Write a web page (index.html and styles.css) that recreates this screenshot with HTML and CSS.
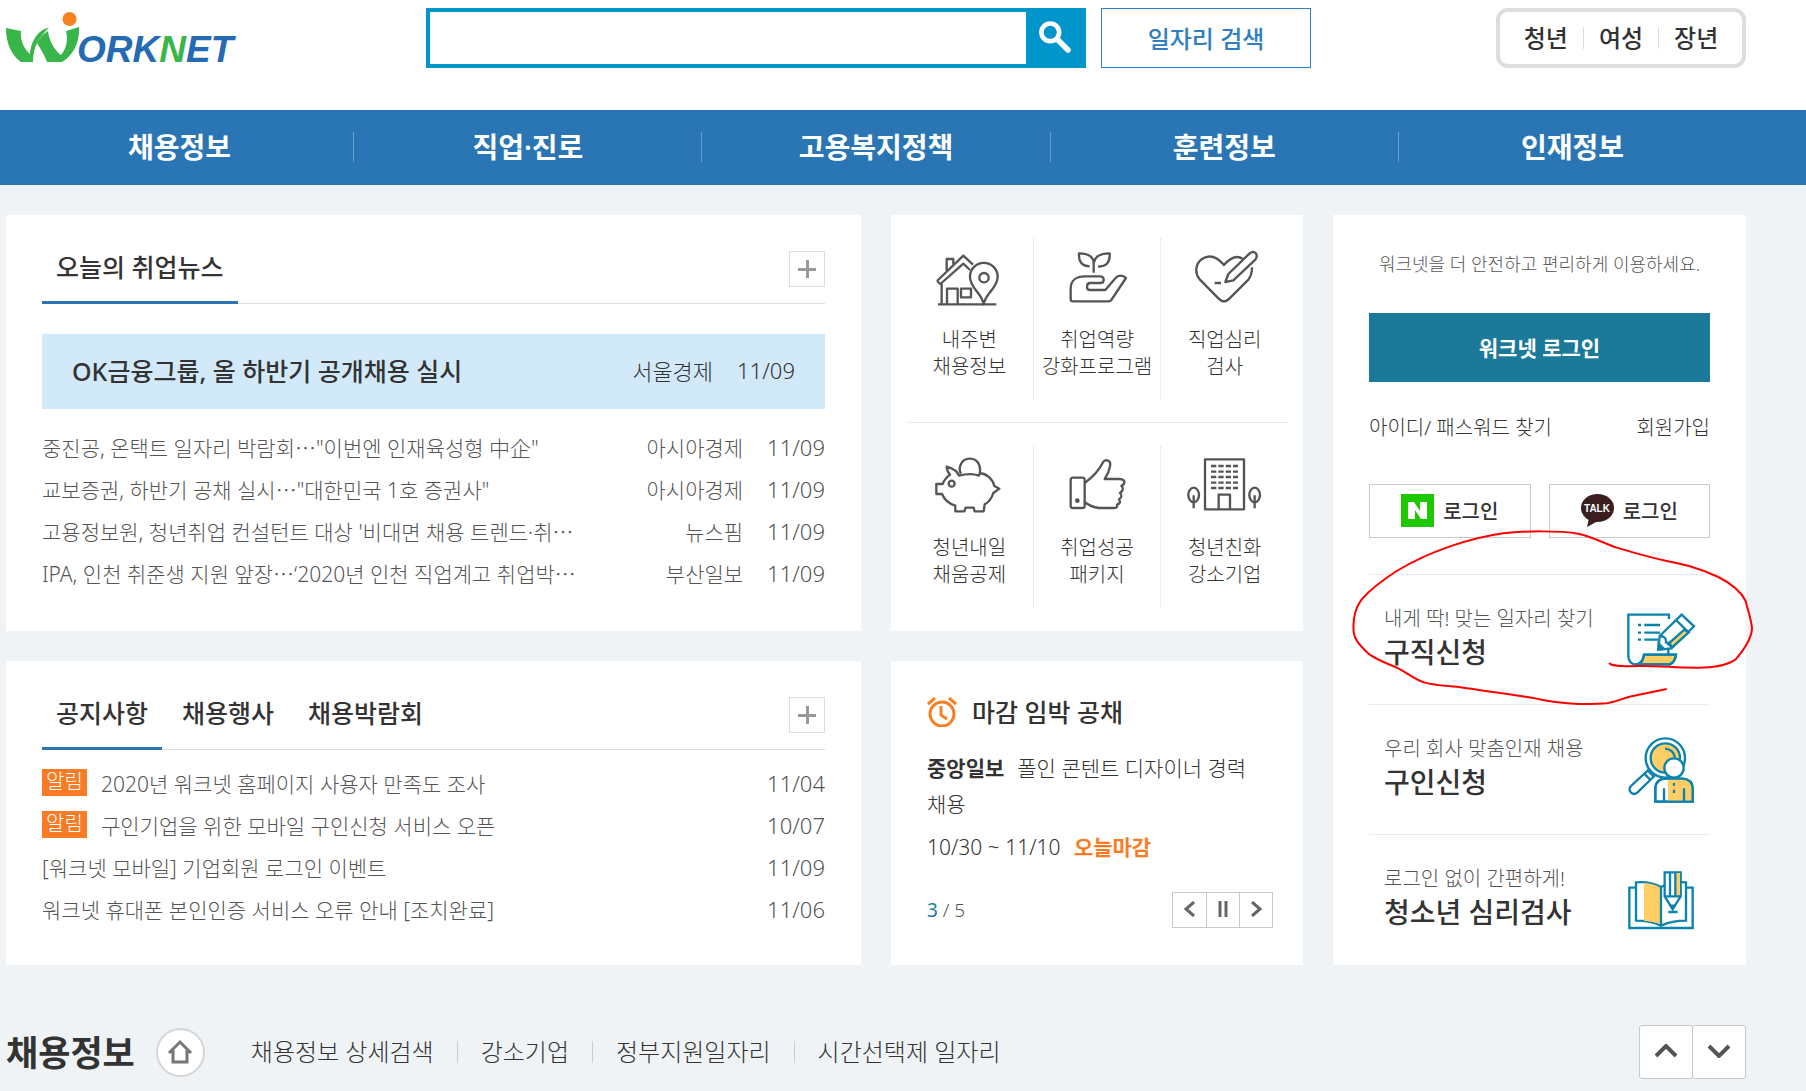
FILE: index.html
```html
<!DOCTYPE html>
<html lang="ko">
<head>
    <meta charset="UTF-8">
    <meta name="viewport" content="width=device-width, initial-scale=1.0">
    <title>워크넷</title>
    <link rel="stylesheet" href="styles.css">
</head>
<body>

<header id="header">
    <a href="#" class="logo" aria-label="WORKNET">
        <svg width="250" height="80" viewBox="0 8 250 80">
            <path fill="#39b54a" d="M6 28 L21 31 C20 40 24 49 30 54 C31 40 39 29 49 28 C40 36 33 46 33 62 L21 62 C11 55 6 43 6 28Z"/>
            <path fill="#39b54a" d="M48 31 C49 40 54 50 61 55 C67 48 68 39 66 31 L79 27 C80 44 72 56 62 62 L47 62 C44 54 40 48 37 43 C40 37 44 33 48 31Z"/>
            <circle fill="#f5821f" cx="69.500" cy="19" r="7"/>
            <text class="logo-text" x="77" y="62"><tspan fill="#256bb4">ORK</tspan><tspan fill="#39b54a">N</tspan><tspan fill="#256bb4">ET</tspan></text>
        </svg>
    </a>
    <form class="search">
        <input type="text" aria-label="검색어">
        <button type="submit" aria-label="검색">
            <svg width="60" height="60" viewBox="0 0 60 60" fill="none" stroke="#fff">
                <circle cx="26" cy="25" r="9.500" stroke-width="5"/>
                <path d="M34 33 L45 44" stroke-width="6" stroke-linecap="round"/>
            </svg>
        </button>
    </form>
    <button type="button" class="job-search">일자리 검색</button>
    <ul class="groups">
        <li><a href="#">청년</a></li>
        <li><a href="#">여성</a></li>
        <li><a href="#">장년</a></li>
    </ul>
</header>

<nav id="gnb">
    <a href="#">채용정보</a>
    <a href="#">직업·진로</a>
    <a href="#">고용복지정책</a>
    <a href="#">훈련정보</a>
    <a href="#">인재정보</a>
</nav>

<main id="main">
    <section class="card news">
        <div class="tabs">
            <a href="#" class="tab on">오늘의 취업뉴스</a>
            <button type="button" class="more" aria-label="더보기"></button>
        </div>
        <a href="#" class="headline">
            <strong>OK금융그룹, 올 하반기 공개채용 실시</strong>
            <span>서울경제</span>
            <span>11/09</span>
        </a>
        <ul class="list">
            <li><a href="#">중진공, 온택트 일자리 박람회⋯"이번엔 인재육성형 中企"</a><span>아시아경제</span><span>11/09</span></li>
            <li><a href="#">교보증권, 하반기 공채 실시⋯"대한민국 1호 증권사"</a><span>아시아경제</span><span>11/09</span></li>
            <li><a href="#">고용정보원, 청년취업 컨설턴트 대상 '비대면 채용 트렌드·취⋯</a><span>뉴스핌</span><span>11/09</span></li>
            <li><a href="#">IPA, 인천 취준생 지원 앞장⋯‘2020년 인천 직업계고 취업박⋯</a><span>부산일보</span><span>11/09</span></li>
        </ul>
    </section>

    <section class="card quick">
        <div class="quick-row">
            <a href="#">
                <svg width="76" height="60" viewBox="155 120 228 180">
                    <path d="M187 222V283M203 283V236H235V283M245 236H275V262H245ZM176 283H351M202 182V147H222V163M173 213L252 137L281 164M173 213L183 222L252 161L272 180M173 213L183 222"/>
                    <path d="M313 283C309 250 272 235 272 200A41 41 0 0 1 355 200C355 235 317 250 313 283Z"/>
                    <circle cx="314" cy="203" r="14"/>
                </svg>
                <span>내주변<br>채용정보</span>
            </a>
            <a href="#">
                <svg width="76" height="60" viewBox="535 120 228 180">
                    <path d="M639 188V158C637 136 617 130 595 130C593 154 603 169 627 169M640 158C643 138 660 130 687 130C689 156 678 170 652 170"/>
                    <path d="M577 274Q570 274 570 266V236C570 209 590 199 612 199H658Q669 199 669 209Q669 219 658 219H628Q619 219 619 230Q619 240 628 240H674L704 205C713 194 727 195 736 204L692 270Q689 274 683 274Z"/>
                </svg>
                <span>취업역량<br>강화프로그램</span>
            </a>
            <a href="#">
                <svg width="76" height="60" viewBox="920 120 228 180">
                    <path d="M1087 146C1068 134 1048 145 1031 165C1008 138 985 134 965 147C944 162 943 190 958 208L1015 266Q1031 283 1047 266L1105 208Q1115 195 1115 172M1003 219H1022"/>
                    <path d="M1035 216L1044 192L1107 131Q1118 122 1127 130Q1132 139 1125 149L1059 211Z"/>
                </svg>
                <span>직업심리<br>검사</span>
            </a>
        </div>
        <div class="quick-row">
            <a href="#">
                <svg width="76" height="60" viewBox="155 744 228 180">
                    <path d="M245 791C236 777 243 746 272 746C300 746 307 776 299 797C282 791 258 792 239 797C235 785 219 775 202 770C203 781 206 788 212 794Q196 806 190 822H171V852H188C196 871 208 881 228 887V904H255L259 893H283L286 904H313L316 883Q334 874 342 849L360 836L345 828C340 807 323 791 300 789"/>
                    <circle cx="217" cy="821" r="9"/>
                </svg>
                <span>청년내일<br>채움공제</span>
            </a>
            <a href="#">
                <svg width="76" height="60" viewBox="535 744 228 180">
                    <rect x="570" y="803" width="42" height="91" rx="7"/>
                    <circle class="dot" cx="590" cy="872" r="7"/>
                    <path d="M612 819C637 801 655 782 667 757Q672 748 682 752Q691 756 688 769C685 787 679 796 672 807H715C730 807 734 814 729 823L722 827Q733 838 718 849Q728 860 715 868Q723 879 709 884Q712 894 700 894H655Q630 891 612 876"/>
                </svg>
                <span>취업성공<br>패키지</span>
            </a>
            <a href="#">
                <svg width="76" height="60" viewBox="920 744 228 180">
                    <path d="M974 748H1091V898H974ZM1015 898V854H1049V898M940 895V856M1123 895V856"/>
                    <path stroke-dasharray="16 6" d="M992 768H1073M992 785H1073M992 801H1073M992 818H1073M992 834H1073"/>
                    <ellipse cx="940" cy="855" rx="16" ry="22"/>
                    <ellipse cx="1123" cy="855" rx="16" ry="22"/>
                </svg>
                <span>청년친화<br>강소기업</span>
            </a>
        </div>
    </section>

    <aside class="card side">
        <p class="welcome">워크넷을 더 안전하고 편리하게 이용하세요.</p>
        <button type="button" class="login">워크넷 로그인</button>
        <div class="member">
            <a href="#">아이디/ 패스워드 찾기</a>
            <a href="#">회원가입</a>
        </div>
        <div class="sns">
            <button type="button">
                <svg width="33" height="33" viewBox="0 0 33 33">
                    <path fill="#1ec800" d="M0 0H33V33H0Z"/>
                    <path fill="#fff" d="M7 8H13L19 17V8H26V25H20L14 16V25H7Z"/>
                </svg>
                로그인
            </button>
            <button type="button">
                <svg width="33" height="33" viewBox="0 0 33 33">
                    <ellipse fill="#3b1e1e" cx="16.500" cy="14" rx="16.500" ry="14"/>
                    <path fill="#3b1e1e" d="M8 24L6 33L17 27Z"/>
                    <text class="talk" x="16" y="18">TALK</text>
                </svg>
                로그인
            </button>
        </div>
        <a href="#" class="apply marked">
            <span>내게 딱! 맞는 일자리 찾기<strong>구직신청</strong></span>
            <svg class="apply-icon" width="70" height="70" viewBox="920 258 210 210">
                <path fill="#ffcf66" d="M974 407H1070Q1068 428 1052 436H960Q972 427 974 407Z"/>
                <path d="M1049 300V287H927V412Q929 435 948 436Q970 434 974 407H1070Q1068 428 1052 436H948M1047 390V405"/>
                <path d="M956 318H965M956 341H965M956 362H965M975 318H1022M975 341H1022M975 362H1016"/>
                <path fill="#fff" d="M1087 287L1124 322L1056 388L1017 392L1021 351Z"/>
                <path fill="#ffcf66" d="M1095 332L1108 340L1058 385L1046 375Z"/>
                <path d="M1070 303L1108 340M1021 351Q1042 352 1040 370Q1056 370 1056 388"/>
                <path fill="#0c83ad" d="M1018 374L1033 389L1017 392Z"/>
            </svg>
            <!-- hand drawn mark round the first item -->
            <svg class="mark" width="407" height="183" viewBox="90 20 1221 549">
                <path d="M868 427C870 436 890 436 920 438C1000 433 1060 443 1135 442C1190 442 1225 432 1247 417C1275 385 1294 355 1296 325C1294 295 1283 270 1277 242C1262 212 1235 190 1195 170C1130 140 1090 132 1040 122C980 109 940 97 890 82C850 68 820 50 775 40C720 31 610 31 550 39C450 53 330 92 230 152C190 178 150 208 125 237C102 268 98 300 101 335C102 355 115 370 145 400C175 422 205 430 235 444C270 463 285 478 315 487C350 497 390 496 430 502C520 516 600 524 680 541C750 552 800 554 860 549C890 544 905 535 935 528L1040 506"/>
            </svg>
        </a>
        <a href="#" class="apply">
            <span>우리 회사 맞춤인재 채용<strong>구인신청</strong></span>
            <svg class="apply-icon" width="70" height="70" viewBox="920 648 210 210">
                <circle fill="#fff" cx="1038" cy="717" r="59"/>
                <circle fill="#ffcf66" cx="1038" cy="717" r="44"/>
                <path d="M1037 689Q1062 691 1067 715"/>
                <path fill="#fff" d="M985 755L1004 772L954 821Q944 829 935 821Q926 811 935 801Z"/>
                <path d="M975 764L993 783"/>
                <circle fill="#fff" cx="1064" cy="747" r="29"/>
                <path fill="#fff" d="M1008 848V808Q1010 779 1040 779H1089Q1119 781 1120 808V848Z"/>
                <path class="plain" fill="#ffcf66" d="M1046 781H1089Q1116 782 1118 808V846H1046Z"/>
                <path d="M1008 848V808Q1010 779 1040 779H1089Q1119 781 1120 808V848ZM1034 808V848M1094 808V848M1064 792V800M1064 812V822"/>
            </svg>
        </a>
        <a href="#" class="apply">
            <span>로그인 없이 간편하게!<strong>청소년 심리검사</strong></span>
            <svg class="apply-icon" width="70" height="70" viewBox="920 1038 210 210">
                <path d="M948 1106H930V1227H1120V1106H1102"/>
                <path fill="#fff" d="M1025 1104Q990 1086 950 1090V1205Q995 1205 1025 1220Q1058 1205 1100 1205V1090Q1060 1086 1025 1104Z"/>
                <path class="plain" fill="#ffcf66" d="M974 1092Q1004 1094 1023 1106V1215Q1000 1207 974 1205Z"/>
                <path d="M1025 1104V1220M1047 1179H1075"/>
                <path fill="#fff" d="M1036 1060H1084V1132L1060 1170L1036 1132Z"/>
                <path class="plain" fill="#ffcf66" d="M1068 1062H1082V1130H1068Z"/>
                <path d="M1036 1132H1084M1052 1060V1132M1068 1060V1132"/>
                <path fill="#0c83ad" d="M1054 1160H1066L1060 1170Z"/>
            </svg>
        </a>
    </aside>

    <section class="card notice">
        <div class="tabs">
            <a href="#" class="tab on">공지사항</a>
            <a href="#" class="tab">채용행사</a>
            <a href="#" class="tab">채용박람회</a>
            <button type="button" class="more" aria-label="더보기"></button>
        </div>
        <ul class="list">
            <li><em>알림</em><a href="#">2020년 워크넷 홈페이지 사용자 만족도 조사</a><span>11/04</span></li>
            <li><em>알림</em><a href="#">구인기업을 위한 모바일 구인신청 서비스 오픈</a><span>10/07</span></li>
            <li><a href="#">[워크넷 모바일] 기업회원 로그인 이벤트</a><span>11/09</span></li>
            <li><a href="#">워크넷 휴대폰 본인인증 서비스 오류 안내 [조치완료]</a><span>11/06</span></li>
        </ul>
    </section>

    <section class="card deadline">
        <h2>
            <svg width="30" height="30" viewBox="0 0 30 30" fill="none" stroke="#f58025" stroke-width="3">
                <circle cx="15" cy="17" r="12"/>
                <path d="M14 9V18L20 22M1 7L8 1M29 7L22 1"/>
            </svg>
            마감 임박 공채
        </h2>
        <p><a href="#"><strong>중앙일보</strong>폴인 콘텐트 디자이너 경력 채용</a></p>
        <p class="period">10/30 ~ 11/10 <b>오늘마감</b></p>
        <div class="pager">
            <span><b>3</b> / 5</span>
            <div class="controls">
                <button type="button" aria-label="이전"><svg width="16" height="16" viewBox="0 0 16 16"><path d="M12 1L4 8L12 15"/></svg></button>
                <button type="button" aria-label="정지"><svg width="16" height="16" viewBox="0 0 16 16"><path d="M5 0V16M11 0V16"/></svg></button>
                <button type="button" aria-label="다음"><svg width="16" height="16" viewBox="0 0 16 16"><path d="M4 1L12 8L4 15"/></svg></button>
            </div>
        </div>
    </section>
</main>

<section id="jobs">
    <h2>채용정보</h2>
    <a href="#" class="home" aria-label="채용정보 홈">
        <svg width="26" height="26" viewBox="0 0 26 26"><path d="M2 14L13 3L24 14M6 11V23H20V11"/></svg>
    </a>
    <ul class="job-links">
        <li><a href="#">채용정보 상세검색</a></li>
        <li><a href="#">강소기업</a></li>
        <li><a href="#">정부지원일자리</a></li>
        <li><a href="#">시간선택제 일자리</a></li>
    </ul>
    <div class="updown">
        <button type="button" aria-label="위로"><svg width="24" height="14" viewBox="0 0 24 14"><path d="M2 12L12 2L22 12"/></svg></button>
        <button type="button" aria-label="아래로"><svg width="24" height="14" viewBox="0 0 24 14"><path d="M2 2L12 12L22 2"/></svg></button>
    </div>
</section>

</body>
</html>
```
FILE: styles.css
```css
* {
    box-sizing: border-box;
}
body {
    margin: 0;
    font-family: "Noto Sans", "Noto Sans CJK KR", sans-serif;
    font-size: 21px;
    font-weight: 300;
    color: #333;
    background-color: #eff3f6;
}
a {
    color: inherit;
    text-decoration: none;
}
ul {
    margin: 0;
    padding: 0;
    list-style: none;
}
h2, p {
    margin: 0;
}
svg {
    display: block;
}
button {
    padding: 0 0 2px;
    font-family: inherit;
    cursor: pointer;
}

/* header */
#header {
    display: flex;
    height: 110px;
    padding: 8px 60px 0 0;
    background-color: #fff;
}
.logo {
    width: 426px;
}
.logo-text {
    font-family: "Liberation Sans", Arial, sans-serif;
    font-size: 37px;
    font-weight: bold;
    font-style: italic;
}
.search {
    display: flex;
    width: 660px;
    height: 60px;
    margin-right: 15px;
    border: 4px solid #0095cb;
}
.search input {
    flex: 1;
    border: 0;
    font-size: 21px;
    outline: none;
}
.search button {
    display: flex;
    align-items: center;
    width: 56px;
    border: 0;
    background-color: #0095cb;
}
.job-search {
    width: 210px;
    height: 60px;
    border: 1px solid #2e7fc3;
    background-color: #fff;
    font-size: 24px;
    font-weight: 500;
    color: #2e7fc3;
}
.groups {
    display: flex;
    align-items: center;
    justify-content: center;
    width: 250px;
    height: 60px;
    margin-left: auto;
    border: 4px solid #ddd;
    border-radius: 12px;
    font-size: 24px;
    font-weight: 500;
    line-height: 22px;
}
.groups li {
    padding: 0 15px;
}
.groups li + li {
    border-left: 1px solid #ddd;
}

/* main menu */
#gnb {
    display: flex;
    align-items: center;
    height: 75px;
    padding: 0 60px 2px 6px;
    background-color: #2a76b5;
}
#gnb a {
    flex: 1;
    font-size: 28px;
    font-weight: 600;
    line-height: 30px;
    text-align: center;
    color: #fff;
}
#gnb a + a {
    border-left: 1px solid #6ba0cd;
}

/* cards */
#main {
    display: grid;
    grid-template-columns: 855fr 412fr 413fr;
    grid-template-rows: 416px 304px;
    gap: 30px;
    padding: 30px 60px 0 6px;
}
.card {
    background-color: #fff;
}
.news, .notice {
    padding: 36px;
}
.tabs {
    display: flex;
    gap: 6px;
    height: 53px;
    border-bottom: 1px solid #ddd;
}
.tab {
    height: 53px;
    padding: 0 14px;
    font-size: 25px;
    font-weight: 500;
    line-height: 33px;
}
.tab.on {
    border-bottom: 3px solid #2a76b5;
}
.more {
    width: 36px;
    height: 36px;
    margin-left: auto;
    border: 1px solid #ddd;
    background: linear-gradient(#999, #999) center / 18px 3px no-repeat, linear-gradient(#999, #999) center / 3px 18px no-repeat #fff;
}
.headline {
    display: flex;
    align-items: center;
    gap: 24px;
    height: 75px;
    margin: 30px 0 18px;
    padding: 0 30px 3px;
    background-color: #d2e9f9;
}
.headline strong {
    flex: 1;
    font-size: 25px;
    font-weight: 500;
}
.headline span {
    font-size: 22px;
}
.list li {
    display: flex;
    align-items: center;
    gap: 24px;
    height: 42px;
    padding-bottom: 3px;
    color: #555;
}
.list a {
    flex: 1;
    white-space: nowrap;
}
.list span:last-child {
    font-size: 22px;
}
.list em {
    width: 45px;
    height: 27px;
    margin-right: -10px;
    background-color: #f97c24;
    font-size: 20px;
    font-style: normal;
    line-height: 26px;
    text-align: center;
    color: #fff;
}
.notice .list {
    margin-top: 13px;
}

.quick {
    padding: 0 15px;
}
.quick-row {
    display: flex;
    padding: 23px 0 22px;
}
.quick-row + .quick-row {
    border-top: 1px solid #ececec;
}
.quick-row a {
    flex: 1;
    height: 162px;
    padding-top: 12px;
    font-size: 20px;
    line-height: 27px;
    text-align: center;
    white-space: nowrap;
}
.quick-row a + a {
    border-left: 1px solid #ececec;
}
.quick-row svg {
    margin: 0 auto 16px;
    overflow: visible;
    fill: none;
    stroke: #555;
    stroke-width: 7;
    stroke-linejoin: round;
}
.quick-row .dot {
    fill: #555;
    stroke: none;
}

/* login */
.side {
    grid-column: 3;
    grid-row: 1 / 3;
    padding: 36px;
}
.welcome {
    height: 62px;
    font-size: 18px;
    line-height: 27px;
    text-align: center;
    color: #555;
}
.login {
    width: 100%;
    height: 69px;
    border: 0;
    background-color: #1b7999;
    font-size: 21px;
    font-weight: bold;
    color: #fff;
}
.member {
    display: flex;
    justify-content: space-between;
    padding: 31px 0 41px;
    font-size: 20px;
    line-height: 30px;
}
.sns {
    display: flex;
    gap: 18px;
    margin-bottom: 36px;
}
.sns button {
    flex: 1;
    display: flex;
    align-items: center;
    justify-content: center;
    gap: 9px;
    height: 54px;
    border: 1px solid #c9c9c9;
    background-color: #fff;
    font-size: 20px;
    font-weight: 500;
    color: #333;
}
.talk {
    font-family: "Liberation Sans", Arial, sans-serif;
    font-size: 10px;
    font-weight: bold;
    text-anchor: middle;
    fill: #fff;
}
.apply {
    display: flex;
    align-items: center;
    justify-content: space-between;
    height: 130px;
    padding: 0 14px 0 15px;
    border-top: 1px solid #ececec;
    font-size: 20px;
    line-height: 30px;
    color: #555;
}
.apply span {
    padding-bottom: 6px;
}
.apply strong {
    display: block;
    font-size: 28px;
    font-weight: 500;
    line-height: 36px;
    color: #333;
}
.apply-icon {
    fill: none;
    stroke: #0c83ad;
    stroke-width: 7;
}
.apply-icon .plain {
    stroke: none;
}
.marked {
    position: relative;
}
.mark {
    position: absolute;
    left: -19px;
    top: -48px;
    fill: none;
    stroke: #f00;
    stroke-width: 6;
    pointer-events: none;
}

/* closing soon */
.deadline {
    padding: 36px 30px 36px 36px;
    line-height: 36px;
    word-break: keep-all;
}
.deadline h2 {
    display: flex;
    align-items: center;
    gap: 15px;
    height: 30px;
    margin-bottom: 23px;
    font-size: 25px;
    font-weight: 500;
}
.deadline strong {
    margin-right: 13px;
    font-weight: 700;
}
.period {
    margin-top: 7px;
}
.period b {
    margin-left: 8px;
    font-weight: 700;
    color: #f97c24;
}
.pager {
    display: flex;
    justify-content: space-between;
    margin-top: 27px;
    font-size: 19px;
    color: #555;
}
.pager b {
    font-weight: 400;
    color: #1b7999;
}
.controls {
    display: flex;
    border: 1px solid #c9c9c9;
}
.controls button {
    display: flex;
    align-items: center;
    justify-content: center;
    width: 33px;
    height: 34px;
    border: 0;
    background-color: #fff;
}
.controls button + button {
    border-left: 1px solid #c9c9c9;
}
.controls svg {
    fill: none;
    stroke: #666;
    stroke-width: 3;
}

/* bottom bar */
#jobs {
    display: flex;
    align-items: center;
    height: 54px;
    margin: 60px 60px 12px 6px;
}
#jobs h2 {
    padding-bottom: 3px;
    font-size: 35px;
    font-weight: 600;
}
.home {
    display: flex;
    align-items: center;
    justify-content: center;
    width: 49px;
    height: 49px;
    margin: 0 23px 0 21px;
    border: 2px solid #d5d5d5;
    border-radius: 50%;
    background-color: #fff;
}
.home svg {
    fill: none;
    stroke: #777;
    stroke-width: 3;
}
.job-links {
    display: flex;
    font-size: 24px;
    line-height: 22px;
}
.job-links li {
    padding: 0 23px;
}
.job-links li + li {
    border-left: 1px solid #ccc;
}
.updown {
    display: flex;
    margin-left: auto;
}
.updown button {
    display: flex;
    align-items: center;
    justify-content: center;
    width: 54px;
    height: 54px;
    border: 1px solid #c5c9cd;
    border-radius: 3px;
    background-color: #fff;
}
.updown button + button {
    margin-left: -1px;
}
.updown svg {
    fill: none;
    stroke: #555;
    stroke-width: 4;
}
```
